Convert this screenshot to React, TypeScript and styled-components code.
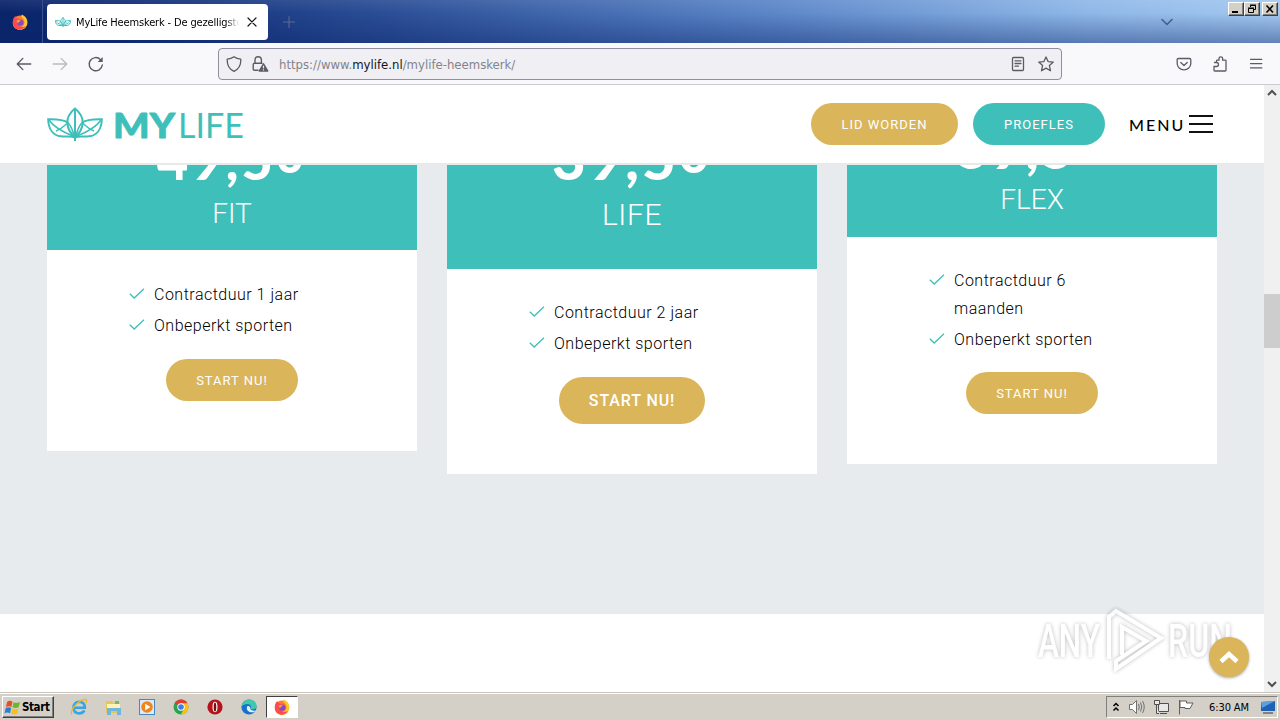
import React from 'react';
import styled, { createGlobalStyle } from 'styled-components';

const TEAL = '#3ebfba';
const GOLD = '#dab55a';

const GlobalStyle = createGlobalStyle`
	* {
		box-sizing: border-box;
	}
	body {
		margin: 0;
		overflow: hidden;
		font-family: 'Roboto', 'Arial', sans-serif;
	}
	h2, p, ul {
		margin: 0;
		padding: 0;
	}
	button {
		border: 0;
		padding: 0;
		background: none;
		font-family: inherit;
	}
	svg {
		display: block;
		flex: none;
	}
`;

const Screen = styled.div`
	width: 1280px;
	height: 720px;
	display: flex;
	flex-direction: column;
	overflow: hidden;
`;

/* ---------- browser ---------- */

const TitleBar = styled.div`
	height: 43px;
	flex: none;
	display: flex;
	align-items: center;
	background: linear-gradient(to bottom, rgba(255, 255, 255, 0.08), rgba(10, 36, 106, 0) 30%, rgba(10, 36, 106, 0.42)),
		linear-gradient(to right, #0a246a 0%, #102d76 10%, #2b4e96 30%, #5c86c8 60%, #8fb8e8 85%, #a3c8f0 100%);
`;

const PinnedTab = styled.div`
	width: 43px;
	height: 43px;
	display: flex;
	align-items: center;
	justify-content: center;
	border-right: 1px solid #3a4f8c;
	padding-right: 2px;
`;

const Tab = styled.div`
	width: 221px;
	height: 36px;
	margin-left: 4px;
	padding: 0 8px;
	display: flex;
	align-items: center;
	border-radius: 4px;
	background: #fff;
	color: #15141a;
`;

const TabTitle = styled.span`
	width: 167px;
	margin: 2px 5px 0 5px;
	overflow: hidden;
	white-space: nowrap;
	font-family: 'DejaVu Sans Condensed', 'DejaVu Sans', sans-serif;
	font-stretch: condensed;
	font-size: 11px;
	letter-spacing: -0.15px;
	color: #000;
	mask-image: linear-gradient(to right, #000 92%, transparent);
`;

const NewTab = styled.button`
	margin-left: 13px;
	color: #5b6a8c;
`;

const TabsMenu = styled.button`
	margin-left: auto;
	margin-right: 53px;
	color: #3f618f;
`;

const WindowButtons = styled.div`
	align-self: flex-start;
	display: flex;
	padding: 2px 2px 0 0;
`;

const WindowButton = styled.button<{ $gap?: boolean }>`
	width: 16px;
	height: 14px;
	margin-left: ${(props) => (props.$gap ? 2 : 0)}px;
	display: flex;
	align-items: center;
	justify-content: center;
	background: #d4d0c8;
	border: 1px solid;
	border-color: #fff #404040 #404040 #fff;
	box-shadow: inset -1px -1px 0 #808080;
`;

const Toolbar = styled.div`
	height: 42px;
	flex: none;
	display: flex;
	align-items: center;
	padding: 0 16px 0 15px;
	background: #f9f9fb;
	border-bottom: 1px solid #cccccf;
	color: #5b5b66;
`;

const NavButtons = styled.div`
	width: 203px;
	display: flex;
	gap: 18px;
`;

const UrlBar = styled.div`
	width: 844px;
	height: 32px;
	padding: 0 7px;
	display: flex;
	align-items: center;
	border: 1px solid #8f8f9d;
	border-radius: 4px;
	background: #f0f0f4;
`;

const UrlBadges = styled.div`
	display: flex;
	align-items: center;
	gap: 9px;
`;

const Url = styled.span`
	flex: 1;
	margin: 2px 0 0 10px;
	font-family: 'DejaVu Sans Condensed', 'DejaVu Sans', sans-serif;
	font-stretch: condensed;
	font-size: 13px;
	color: #83838c;

	b {
		font-weight: 400;
		color: #15141a;
	}
`;

const UrlActions = styled.div`
	display: flex;
	gap: 12px;
`;

const ToolbarActions = styled.div`
	margin-left: auto;
	display: flex;
	gap: 20px;
`;

/* ---------- page ---------- */

const Viewport = styled.div`
	position: relative;
	height: 607px;
	flex: none;
	display: flex;
	background: #fff;
`;

const Page = styled.div`
	width: 1264px;
	display: flex;
	flex-direction: column;
`;

const Header = styled.header`
	height: 80px;
	flex: none;
	display: flex;
	align-items: center;
	padding: 0 51px 0 47px;
	background: #fff;
	border-bottom: 2px solid #e8eaea;
`;

const HeaderNav = styled.nav`
	margin-left: auto;
	display: flex;
	align-items: center;
	gap: 15px;
`;

const Pill = styled.button<{ $color?: string; $width?: number; $large?: boolean }>`
	width: ${(props) => props.$width || 132}px;
	height: ${(props) => (props.$large ? 47 : 42)}px;
	border-radius: 24px;
	background: ${(props) => props.$color || GOLD};
	color: #fff;
	font-size: ${(props) => (props.$large ? 16 : 13)}px;
	font-weight: ${(props) => (props.$large ? 500 : 400)};
	letter-spacing: ${(props) => (props.$large ? 0.9 : 1)}px;
	white-space: nowrap;
`;

const Menu = styled.div`
	width: 84px;
	display: flex;
	align-items: center;
	justify-content: space-between;
	margin-left: 9px;
	font-family: 'Lato', sans-serif;
	font-size: 16px;
	font-weight: 500;
	letter-spacing: 2px;
	color: #000;
`;

const Burger = styled.span`
	width: 24px;
	height: 18px;
	border-top: 2px solid #111;
	border-bottom: 2px solid #111;
	display: flex;
	align-items: center;

	&::before {
		content: '';
		width: 100%;
		height: 2px;
		background: #111;
	}
`;

const Plans = styled.section`
	height: 449px;
	flex: none;
	display: flex;
	align-items: flex-start;
	gap: 30px;
	padding-left: 47px;
	background: #e7ebee;
`;

const Card = styled.article`
	width: 370px;
	background: #fff;
`;

const CardHead = styled.div<{ $height: number; $bottom: number }>`
	height: ${(props) => props.$height}px;
	padding-bottom: ${(props) => props.$bottom}px;
	display: flex;
	flex-direction: column;
	justify-content: flex-end;
	align-items: center;
	overflow: hidden;
	background: ${TEAL};
	color: #fff;
`;

const Price = styled.p<{ $large?: boolean; $gap: number }>`
	flex: none;
	margin-bottom: ${(props) => props.$gap}px;
	font-family: 'Lato', sans-serif;
	font-weight: 900;
	font-size: ${(props) => (props.$large ? 58 : 54)}px;
	line-height: 60px;
	letter-spacing: 3px;
	white-space: nowrap;

	sup {
		font-size: 0.9em;
		line-height: 0;
		vertical-align: 7px;
	}
`;

const PlanName = styled.h2<{ $large?: boolean }>`
	flex: none;
	font-weight: 300;
	font-size: ${(props) => (props.$large ? 30 : 28)}px;
	line-height: 30px;
	letter-spacing: ${(props) => (props.$large ? 0.6 : 0)}px;
`;

const CardBody = styled.div<{ $top: number }>`
	padding: ${(props) => props.$top}px 0 50px;
	display: flex;
	flex-direction: column;
	align-items: center;
`;

const Features = styled.ul`
	width: 206px;
	list-style: none;
`;

const Feature = styled.li`
	display: flex;
	gap: 9px;
	width: 180px;
	margin-bottom: 3px;
	font-size: 16px;
	font-weight: 300;
	line-height: 28px;
	letter-spacing: 0.5px;
	color: #000;

	svg {
		margin-top: 5px;
	}
`;

const Order = styled.div<{ $top: number }>`
	margin-top: ${(props) => props.$top}px;
	display: flex;
`;

const Scrollbar = styled.div`
	width: 16px;
	display: flex;
	flex-direction: column;
	justify-content: space-between;
	align-items: center;
	padding: 4px 0;
	background: #f0f0f0;
`;

const Thumb = styled.div`
	width: 16px;
	height: 54px;
	margin: 0 0 136px;
	background: #cdcdcd;
`;

const ScrollTop = styled.button`
	position: absolute;
	left: 1209px;
	top: 552px;
	width: 40px;
	height: 40px;
	display: flex;
	align-items: center;
	justify-content: center;
	border-radius: 50%;
	background: ${GOLD};
	box-shadow: 0 1px 3px rgba(0, 0, 0, 0.35);
`;

const Watermark = styled.svg`
	position: absolute;
	left: 1034px;
	top: 520px;
	filter: drop-shadow(0 0 2px rgba(0, 0, 0, 0.35));
	opacity: 0.75;
`;

/* ---------- taskbar ---------- */

const Taskbar = styled.div`
	height: 28px;
	flex: none;
	display: flex;
	align-items: center;
	padding: 1px 2px 0;
	background: #d4d0c8;
	border-top: 1px solid #c9c5bd;
	box-shadow: inset 0 1px 0 #fff;
	font-family: 'DejaVu Sans Condensed', 'DejaVu Sans', sans-serif;
	font-stretch: condensed;
	font-size: 11px;
	color: #000;
`;

const StartButton = styled.button`
	width: 52px;
	height: 22px;
	display: flex;
	align-items: center;
	gap: 1px;
	padding-left: 1px;
	border: 1px solid;
	border-color: #fff #404040 #404040 #fff;
	box-shadow: inset -1px -1px 0 #808080;
	font-size: 11.5px;
	font-weight: 700;
	letter-spacing: -0.4px;
	color: #000;
`;

const QuickLaunch = styled.div`
	display: flex;
	align-items: center;
	margin-left: 8px;
`;

const TaskItem = styled.div<{ $active?: boolean }>`
	width: ${(props) => (props.$active ? 32 : 34)}px;
	height: 22px;
	display: flex;
	align-items: center;
	justify-content: center;
	background: ${(props) => (props.$active ? '#fff' : 'transparent')};
	border: ${(props) => (props.$active ? '1px solid' : '0')};
	border-color: #404040 #fff #fff #404040;
`;

const Tray = styled.div`
	margin-left: auto;
	width: 172px;
	height: 22px;
	display: flex;
	align-items: center;
	padding-left: 5px;
	border: 1px solid;
	border-color: #808080 #fff #fff #808080;
`;

const Clock = styled.span`
	margin: 0 9px 0 15px;
	width: 42px;
	white-space: nowrap;
	letter-spacing: -0.1px;
`;

const TrayIcons = styled.div`
	display: flex;
	align-items: center;
	gap: 8px;
`;

/* ---------- icons ---------- */

function Lotus({ width, height, stroke }: { width: number; height: number; stroke: number }) {
	return (
		<svg width={width} height={height} viewBox="0 0 56 34" fill="none" stroke={TEAL} strokeWidth={stroke}>
			<path d="M28 1.500C17.500 10 18 21 28 30.500C38 21 38.500 10 28 1.500Z" />
			<path d="M28 1.500V34" />
			<path d="M20.800 15.500C16 12 9 12 1.200 12.200C1.500 22 6 28.500 14 29.300C20 30 24 28.500 27.500 30.500" />
			<path d="M35.200 15.500C40 12 47 12 54.800 12.200C54.500 22 50 28.500 42 29.300C36 30 32 28.500 28.500 30.500" />
			<path d="M9 24C15 22 17 19 21 15.500M47 24C41 22 39 19 35 15.500" strokeWidth={stroke * 0.7} />
			<path d="M2 13C6 19 13 24 27 29.500M54 13C50 19 43 24 29 29.500" strokeWidth={stroke * 0.8} />
			<path d="M20.800 15.500C24 19 26 24 27 29M35.200 15.500C32 19 30 24 29 29" strokeWidth={stroke * 0.8} />
		</svg>
	);
}

function Logo() {
	return (
		<svg width="198" height="34" viewBox="0 0 198 34">
			<Lotus width={56} height={34} stroke={2} />
			<g fill={TEAL} stroke={TEAL} strokeLinejoin="round" fontFamily="'Lato', sans-serif">
				<text x="66" y="30.500" fontSize="34" fontWeight="900" strokeWidth="0.800" textLength="62" lengthAdjust="spacingAndGlyphs">
					MY
				</text>
				<text x="131" y="31" fontSize="35" fontWeight="400" strokeWidth="0" textLength="66" lengthAdjust="spacingAndGlyphs">
					LIFE
				</text>
			</g>
		</svg>
	);
}

function Firefox({ size = 16 }) {
	return (
		<svg width={size} height={size} viewBox="0 0 16 16">
			<circle cx="8" cy="8.600" r="7.200" fill="#ff7b2c" />
			<path d="M10 0.500C13 2 15.800 5 15.400 9C15 13 12 15.800 8 15.800C4 15.800 1 13 0.800 9.500C4 15 12 14 12.500 9C12.700 6 11 4 9.500 3C9.300 2 9.500 1 10 0.500Z" fill="#ffc52e" />
			<path d="M0.800 9C0.600 5.500 2 3 3.500 2C3.700 3 4 3.500 4.500 4L7 5L5 9L8 12.500C11 13.500 13 12.500 14 12C12 15 9 16 7 15.700C4 15.300 1 13 0.800 9Z" fill="#ff4a4f" />
			<circle cx="8.300" cy="8.600" r="3.200" fill="#8449c9" />
			<path d="M4.500 6.500C6 5.500 8 6 9 7C7.500 7 6.500 8 6 9.500Z" fill="#ffa436" />
		</svg>
	);
}

function Check() {
	return (
		<svg width="16" height="16" viewBox="0 0 16 16" fill="none" stroke={TEAL} strokeWidth="1.300">
			<path d="M0.800 7.800L5.200 12L15 2.800" />
		</svg>
	);
}

function Glyph({ d, size = 16, width = 1.3, opacity = 1 }: { d: string; size?: number; width?: number; opacity?: number }) {
	return (
		<svg
			width={size}
			height={size}
			viewBox="0 0 16 16"
			fill="none"
			stroke="currentColor"
			strokeWidth={width}
			strokeLinecap="round"
			strokeLinejoin="round"
			opacity={opacity}
		>
			<path d={d} />
		</svg>
	);
}

function Reload() {
	return (
		<svg width="18" height="18" viewBox="0 0 18 18" fill="none" stroke="currentColor" strokeWidth="1.400" strokeLinecap="round">
			<path d="M15.300 10A6.600 6.600 0 1 1 13.600 4.700" />
			<path d="M15.700 2V7H10.700Z" fill="currentColor" stroke="none" />
		</svg>
	);
}

function LockWarning() {
	return (
		<svg width="18" height="18" viewBox="0 0 18 18" fill="none" stroke="currentColor" strokeWidth="1.400">
			<path d="M7.500 15.300H3.500Q2.200 15.300 2.200 14V9.500Q2.200 8.200 3.500 8.200H11.500M4 8V5Q4 1.700 7.200 1.700Q10.400 1.700 10.400 5V8" />
			<path d="M12.500 8.800L16.800 16H8.200Z" fill="currentColor" strokeLinejoin="round" />
			<path d="M12.500 10.800V13.300M12.500 14.300V15.400" stroke="#f0f0f4" strokeWidth="1.200" />
		</svg>
	);
}

function WindowsFlag() {
	return (
		<svg width="17" height="17" viewBox="0 0 16 16">
			<path d="M3 2.500Q5.500 1 8 2.500L7 7.500Q4.500 6 1.800 7.500Z" fill="#e8501e" />
			<path d="M9 3Q11.500 4.300 15 2.800L13.800 7.800Q11 9 8 7.800Z" fill="#6cb52d" />
			<path d="M1.600 8.500Q4.300 7 6.800 8.500L5.700 13.500Q3 12 0.500 13.500Z" fill="#2c7fd0" />
			<path d="M7.800 9Q10.500 10.300 13.600 9L12.400 13.800Q9.500 15.200 6.700 13.800Z" fill="#f8c01c" />
		</svg>
	);
}

function InternetExplorer() {
	return (
		<svg width="18" height="18" viewBox="0 0 18 18" fill="none">
			<path d="M14.500 12.500Q12.500 15.500 9 15.500Q3.500 15 3.500 9.500Q4 4 9 3.700Q15 4 14.800 9.700H4" stroke="#37a5e4" strokeWidth="2.600" />
			<path d="M2 16.500C-1 13 8 3 14 1.500C17 1 17 3 16 5" stroke="#e9b82b" strokeWidth="1.300" />
		</svg>
	);
}

function Explorer() {
	return (
		<svg width="17" height="17" viewBox="0 0 17 17">
			<path d="M1 2H7L8 4H15V14H1Z" fill="#e8c558" />
			<path d="M2 5H15V9H2Z" fill="#fff3b5" />
			<path d="M10 2H14V5H10Z" fill="#79b956" />
			<path d="M2 9H16V16H12V12H6V16H2Z" fill="#6fb7df" />
		</svg>
	);
}

function MediaPlayer() {
	return (
		<svg width="16" height="16" viewBox="0 0 16 16">
			<rect x="0.500" y="0.500" width="15" height="15" fill="#d9ebfa" stroke="#4687c4" />
			<circle cx="8" cy="8" r="5.800" fill="#f08519" />
			<path d="M6.200 4.800L11.500 8L6.200 11.200Z" fill="#fff" />
		</svg>
	);
}

function Chrome() {
	return (
		<svg width="16" height="16" viewBox="0 0 16 16">
			<circle cx="8" cy="8" r="7.500" fill="#2fa24f" />
			<path d="M8 8L1.500 4.300A7.500 7.500 0 0 1 14.500 4.300Z" fill="#e33b2e" />
			<path d="M8 8V4.300H14.500A7.500 7.500 0 0 1 8 15.500L11 9.500Z" fill="#fbc116" />
			<circle cx="8" cy="8" r="3.700" fill="#fff" />
			<circle cx="8" cy="8" r="2.800" fill="#3d7fe8" />
		</svg>
	);
}

function Opera() {
	return (
		<svg width="16" height="16" viewBox="0 0 16 16">
			<circle cx="8" cy="8" r="7.600" fill="#b5121b" />
			<ellipse cx="8" cy="8" rx="2.500" ry="5.200" fill="#fff" />
			<ellipse cx="8" cy="8" rx="1.300" ry="4.600" fill="#7d0c13" />
		</svg>
	);
}

function Edge() {
	return (
		<svg width="16" height="16" viewBox="0 0 16 16">
			<circle cx="8" cy="8" r="7.600" fill="#1673c8" />
			<path d="M0.500 8C1 2 6 0.200 9 0.500C14 1 16 5 15.500 8C15 10.500 11 11 9.500 9.800C11 7 9 5 6.500 5C3.500 5 1 6.500 0.500 8Z" fill="#3fc8ae" />
			<path d="M6.500 7C4.500 10 7 14 12.500 13.200C14 13 15 11.500 15 11.500C12 12.500 9 11 9.300 9.600C9.500 8 8 6.500 6.500 7Z" fill="#e6eef5" />
		</svg>
	);
}

/* ---------- data ---------- */

const plans = [
	{ name: 'FIT', price: '49,5', features: ['Contractduur 1 jaar', 'Onbeperkt sporten'], height: 85, bottom: 21, priceGap: 9, top: 31, gap: 16, large: false },
	{ name: 'LIFE', price: '39,5', features: ['Contractduur 2 jaar', 'Onbeperkt sporten'], height: 104, bottom: 39, priceGap: 12, top: 30, gap: 16, large: true },
	{ name: 'FLEX', price: '59,5', features: ['Contractduur 6 maanden', 'Onbeperkt sporten'], height: 72, bottom: 22, priceGap: 6, top: 30, gap: 15, large: false },
];

function PlanCard({ plan }: any) {
	return (
		<Card>
			<CardHead $height={plan.height} $bottom={plan.bottom}>
				<Price $large={plan.large} $gap={plan.priceGap}>
					{plan.price}
					<sup>0</sup>
				</Price>
				<PlanName $large={plan.large}>{plan.name}</PlanName>
			</CardHead>
			<CardBody $top={plan.top}>
				<Features>
					{plan.features.map((feature: string) => (
						<Feature key={feature}>
							<Check />
							{feature}
						</Feature>
					))}
				</Features>
				<Order $top={plan.gap}>
					<Pill $large={plan.large} $width={plan.large ? 146 : 132}>
						START NU!
					</Pill>
				</Order>
			</CardBody>
		</Card>
	);
}

function Browser() {
	return (
		<>
			<TitleBar>
				<PinnedTab>
					<Firefox />
				</PinnedTab>
				<Tab>
					<Lotus width={16} height={10} stroke={3.4} />
					<TabTitle>MyLife Heemskerk - De gezelligste s</TabTitle>
					<Glyph d="M4 4L12 12M12 4L4 12" width={1.2} />
				</Tab>
				<NewTab>
					<Glyph d="M8 2.500V13.500M2.500 8H13.500" width={1.1} />
				</NewTab>
				<TabsMenu>
					<Glyph d="M3 5.500L8 10.500L13 5.500" width={1.6} />
				</TabsMenu>
				<WindowButtons>
					<WindowButton>
						<svg width="12" height="10">
							<path d="M2 8H8" stroke="#000" strokeWidth="2" />
						</svg>
					</WindowButton>
					<WindowButton>
						<svg width="12" height="10" fill="none" stroke="#000">
							<path d="M4.500 3V1.500H9.500V5.500H8M4 1H10" />
							<path d="M2.500 4.500H7.500V8.500H2.500ZM2 4H8" />
						</svg>
					</WindowButton>
					<WindowButton $gap>
						<svg width="12" height="10">
							<path d="M2.500 1.500L9 8.500M9 1.500L2.500 8.500" stroke="#000" strokeWidth="1.600" />
						</svg>
					</WindowButton>
				</WindowButtons>
			</TitleBar>
			<Toolbar>
				<NavButtons>
					<Glyph size={18} d="M14 8H2.500M7 3L2 8L7 13" width={1.2} />
					<Glyph size={18} d="M2 8H13.500M9 3L14 8L9 13" width={1.2} opacity={0.4} />
					<Reload />
				</NavButtons>
				<UrlBar>
					<UrlBadges>
						<Glyph d="M8 0.800C9.500 2 12 3 14.800 3.200C15 9 13 13 8 15.300C3 13 1 9 1.200 3.200C4 3 6.500 2 8 0.800Z" />
						<LockWarning />
					</UrlBadges>
					<Url>
						https://www.<b>mylife.nl</b>/mylife-heemskerk/
					</Url>
					<UrlActions>
						<Glyph d="M3.500 1.500H12.500Q13.500 1.500 13.500 2.500V13.500Q13.500 14.500 12.500 14.500H3.500Q2.500 14.500 2.500 13.500V2.500Q2.500 1.500 3.500 1.500ZM5 4.800H11M5 7.500H11M5 10.200H8.500" />
						<Glyph d="M8 0.900L10.100 5.600L15.300 6.100L11.400 9.600L12.500 14.800L8 12.100L3.500 14.800L4.600 9.600L0.700 6.100L5.900 5.600Z" />
					</UrlActions>
				</UrlBar>
				<ToolbarActions>
					<Glyph d="M2.500 2.500H13.500Q14.800 2.500 14.800 3.800V7.500A6.800 6.300 0 0 1 1.200 7.500V3.800Q1.200 2.500 2.500 2.500ZM4.800 6.500L8 9.500L11.200 6.500" />
					<Glyph d="M2 10.500V14.200Q2 15 2.800 15H13.200Q14 15 14 14.200V5Q14 4.200 13.200 4.200H10.600V2.600A1.800 1.800 0 0 0 7 2.600V4.200H5.300Q4.500 4.200 4.500 5V6.500H2.500M2 10.500H4.500A2 2 0 0 0 4.500 6.500" />
					<Glyph d="M2.500 3.300H13.800M2.500 7.600H13.800M2.500 11.900H13.800" />
				</ToolbarActions>
			</Toolbar>
		</>
	);
}

function App() {
	return (
		<Screen>
			<GlobalStyle />
			<Browser />
			<Viewport>
				<Page>
					<Header>
						<Logo />
						<HeaderNav>
							<Pill $width={147}>LID WORDEN</Pill>
							<Pill $color={TEAL}>PROEFLES</Pill>
							<Menu>
								MENU
								<Burger />
							</Menu>
						</HeaderNav>
					</Header>
					<Plans>
						{plans.map((plan) => (
							<PlanCard key={plan.name} plan={plan} />
						))}
					</Plans>
				</Page>
				<Scrollbar>
					<svg width="10" height="8" fill="none" stroke="#505050" strokeWidth="2">
						<path d="M1 6L5 2L9 6" />
					</svg>
					<Thumb />
					<svg width="10" height="8" fill="none" stroke="#505050" strokeWidth="2">
						<path d="M1 2L5 6L9 2" />
					</svg>
				</Scrollbar>
				<Watermark width="204" height="72" viewBox="0 0 204 72">
					<g fill="#fff" fontFamily="'Roboto', sans-serif" fontWeight="500" fontSize="46">
						<text x="4" y="52" textLength="62" lengthAdjust="spacingAndGlyphs">
							ANY
						</text>
						<text x="134" y="52" textLength="64" lengthAdjust="spacingAndGlyphs">
							RUN
						</text>
					</g>
					<g fill="none" stroke="#fff" strokeWidth="4">
						<path d="M75 54V12L82 6L127 33L82 64V56L112 36L88 22V50" />
					</g>
				</Watermark>
				<ScrollTop>
					<svg width="20" height="20" fill="none" stroke="#fff" strokeWidth="4.500">
						<path d="M2 14.500L10 7L18 14.500" />
					</svg>
				</ScrollTop>
			</Viewport>
			<Taskbar>
				<StartButton>
					<WindowsFlag />
					Start
				</StartButton>
				<QuickLaunch>
					<TaskItem><InternetExplorer /></TaskItem>
					<TaskItem><Explorer /></TaskItem>
					<TaskItem><MediaPlayer /></TaskItem>
					<TaskItem><Chrome /></TaskItem>
					<TaskItem><Opera /></TaskItem>
					<TaskItem><Edge /></TaskItem>
					<TaskItem $active><Firefox /></TaskItem>
				</QuickLaunch>
				<Tray>
					<TrayIcons>
						<svg width="8" height="12" fill="none" stroke="#000" strokeWidth="1.500">
							<path d="M1.500 5L4 2.500L6.500 5M1.500 9.500L4 7L6.500 9.500" />
						</svg>
						<svg width="17" height="16" fill="#fff" stroke="#707070">
							<path d="M1.500 5.500H4.500L8.500 1.500V14.500L4.500 10.500H1.500Z" />
							<path d="M10.500 5Q12 8 10.500 11M12.500 3.500Q15 8 12.500 12.500M14.500 2Q18 8 14.500 14" fill="none" />
						</svg>
						<svg width="17" height="16" fill="#e8e8e8" stroke="#505050">
							<path d="M5.500 4.500H15.500V12.500H5.500ZM7 14.500H14" />
							<path d="M1.500 1.500H6.500V5.500H1.500ZM3.500 5.500V14.500H6" />
						</svg>
						<svg width="16" height="16" fill="#fff" stroke="#606060">
							<path d="M1.500 1V15.500M2 2H8.500V4H15L12 9.500H7V8.500H2Z" />
						</svg>
					</TrayIcons>
					<Clock>6:30 AM</Clock>
					<svg width="16" height="14">
						<path d="M1 2L15 1V11H1Z" fill="#1d62b7" />
						<path d="M1 2L15 1L2 8Z" fill="#5da0dc" />
						<path d="M3 13H13" stroke="#333" />
					</svg>
				</Tray>
			</Taskbar>
		</Screen>
	);
}

export default App;
